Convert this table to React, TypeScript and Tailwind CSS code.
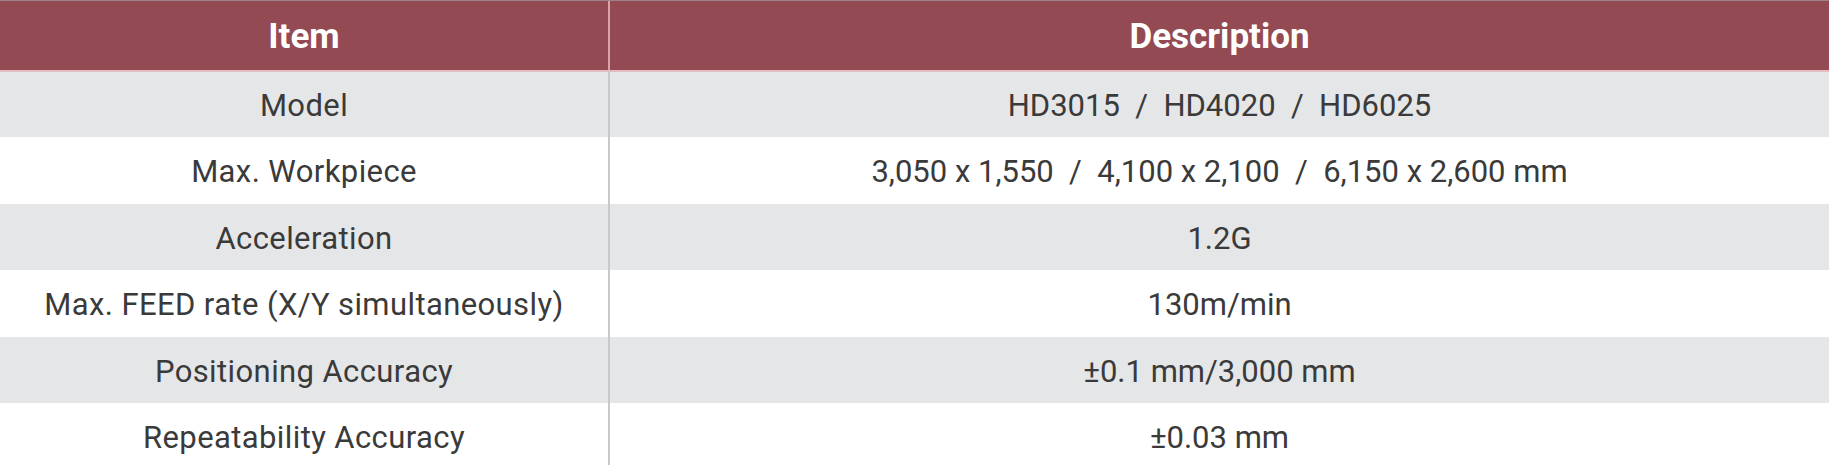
import React from "react";

const rows: { item: string; desc: string; h: string; stripe: boolean }[] = [
  { item: "Model", desc: "HD3015  /  HD4020  /  HD6025", h: "h-[65px]", stripe: true },
  { item: "Max. Workpiece", desc: "3,050 x 1,550  /  4,100 x 2,100  /  6,150 x 2,600 mm", h: "h-[67px]", stripe: false },
  { item: "Acceleration", desc: "1.2G", h: "h-[66px]", stripe: true },
  { item: "Max. FEED rate (X/Y simultaneously)", desc: "130m/min", h: "h-[67px]", stripe: false },
  { item: "Positioning Accuracy", desc: "±0.1 mm/3,000 mm", h: "h-[66px]", stripe: true },
  { item: "Repeatability Accuracy", desc: "±0.03 mm", h: "h-[67px]", stripe: false },
];

export default function App() {
  return (
    <div className="w-[1829px] h-[465px] overflow-hidden bg-white font-['Roboto','Liberation_Sans',sans-serif]">
      <div className="flex h-[70px] bg-[#934a53] border-t border-[#9b8588] text-white font-bold text-[35px]">
        <div className="w-[610px] shrink-0 flex items-center justify-center pt-[4px] border-r-2 border-[#d9a3a9]">
          <span className="whitespace-pre">Item</span>
        </div>
        <div className="flex-1 flex items-center justify-center pt-[4px]">
          <span className="whitespace-pre">Description</span>
        </div>
      </div>
      <div className="h-[2px] bg-[#e2bcc0]" />
      {rows.map((r) => (
        <div
          key={r.item}
          className={`flex ${r.h} ${r.stripe ? "bg-[#e5e6e8]" : "bg-white"} text-[#3a3a3a]`}
        >
          <div className="w-[610px] shrink-0 flex items-center justify-center pt-[4px] border-r-2 border-[#c9c9cb] text-[31px] tracking-[0.4px]">
            <span className="whitespace-pre">{r.item}</span>
          </div>
          <div className="flex-1 flex items-center justify-center pt-[4px] text-[31px]">
            <span className="whitespace-pre">{r.desc}</span>
          </div>
        </div>
      ))}
    </div>
  );
}
